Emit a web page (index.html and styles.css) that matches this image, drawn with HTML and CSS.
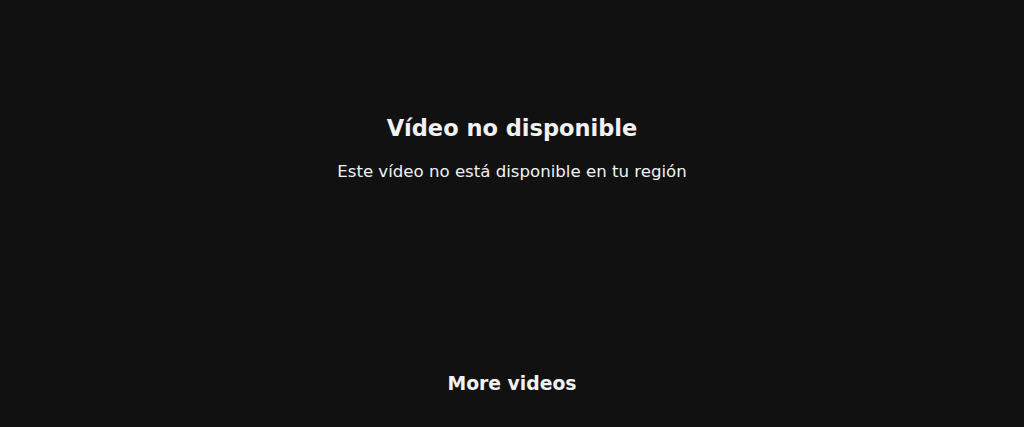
FILE: index.html
```html
<!DOCTYPE html>
<html lang="es">
<head>
<meta charset="utf-8">
<link rel="stylesheet" href="styles.css">
</head>
<body>
<main class="player">
  <section class="message">
    <h1 class="title">Vídeo no disponible</h1>
    <p class="subtitle">Este vídeo no está disponible en tu región</p>
  </section>
  <footer class="more">More videos</footer>
</main>
</body>
</html>
```
FILE: styles.css
```css
html, body {
  margin: 0;
  padding: 0;
  background: #111112;
}
.player {
  width: 1024px;
  height: 427px;
  display: flex;
  flex-direction: column;
  align-items: center;
  color: #f2f2f2;
  font-family: "DejaVu Sans", sans-serif;
}
.message {
  padding-top: 113px;
  display: flex;
  flex-direction: column;
  align-items: center;
}
.title {
  margin: 0;
  font-size: 22.5px;
  font-weight: 700;
  line-height: 30px;
}
.subtitle {
  margin: 19px 0 0;
  font-size: 16.6px;
  font-weight: 400;
  line-height: 20px;
}
.more {
  margin-top: auto;
  margin-bottom: 30px;
  font-size: 18.8px;
  font-weight: 700;
  line-height: 26px;
}
```
